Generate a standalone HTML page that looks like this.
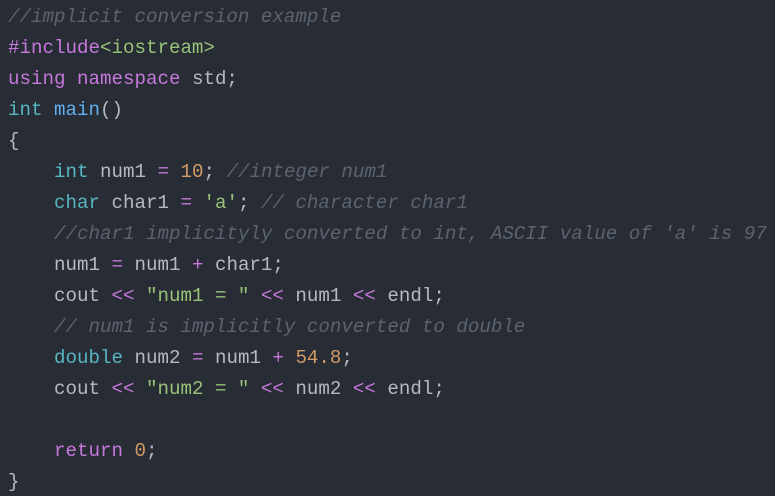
<!DOCTYPE html>
<html><head><meta charset="utf-8"><style>
html,body{margin:0;padding:0;background:#282c34;width:775px;height:496px;overflow:hidden}
pre{margin:0;padding:2px 0 0 8px;font-family:"Liberation Mono",monospace;font-size:19.17px;line-height:31px;color:#b4bac4;white-space:pre}
.c{color:#5c6370;font-style:italic}.k{color:#c678dd}.s{color:#98c379}.t{color:#56b6c2}.f{color:#61afef}.n{color:#d19a66}
</style></head><body><pre><span class="c">//implicit conversion example</span>
<span class="k">#include</span><span class="s">&lt;iostream&gt;</span>
<span class="k">using</span> <span class="k">namespace</span> std;
<span class="t">int</span> <span class="f">main</span>()
{
    <span class="t">int</span> num1 <span class="k">=</span> <span class="n">10</span>; <span class="c">//integer num1</span>
    <span class="t">char</span> char1 <span class="k">=</span> <span class="s">'a'</span>; <span class="c">// character char1</span>
    <span class="c">//char1 implicityly converted to int, ASCII value of 'a' is 97</span>
    num1 <span class="k">=</span> num1 <span class="k">+</span> char1;
    cout <span class="k">&lt;&lt;</span> <span class="s">"num1 = "</span> <span class="k">&lt;&lt;</span> num1 <span class="k">&lt;&lt;</span> endl;
    <span class="c">// num1 is implicitly converted to double</span>
    <span class="t">double</span> num2 <span class="k">=</span> num1 <span class="k">+</span> <span class="n">54.8</span>;
    cout <span class="k">&lt;&lt;</span> <span class="s">"num2 = "</span> <span class="k">&lt;&lt;</span> num2 <span class="k">&lt;&lt;</span> endl;

    <span class="k">return</span> <span class="n">0</span>;
}</pre></body></html>
